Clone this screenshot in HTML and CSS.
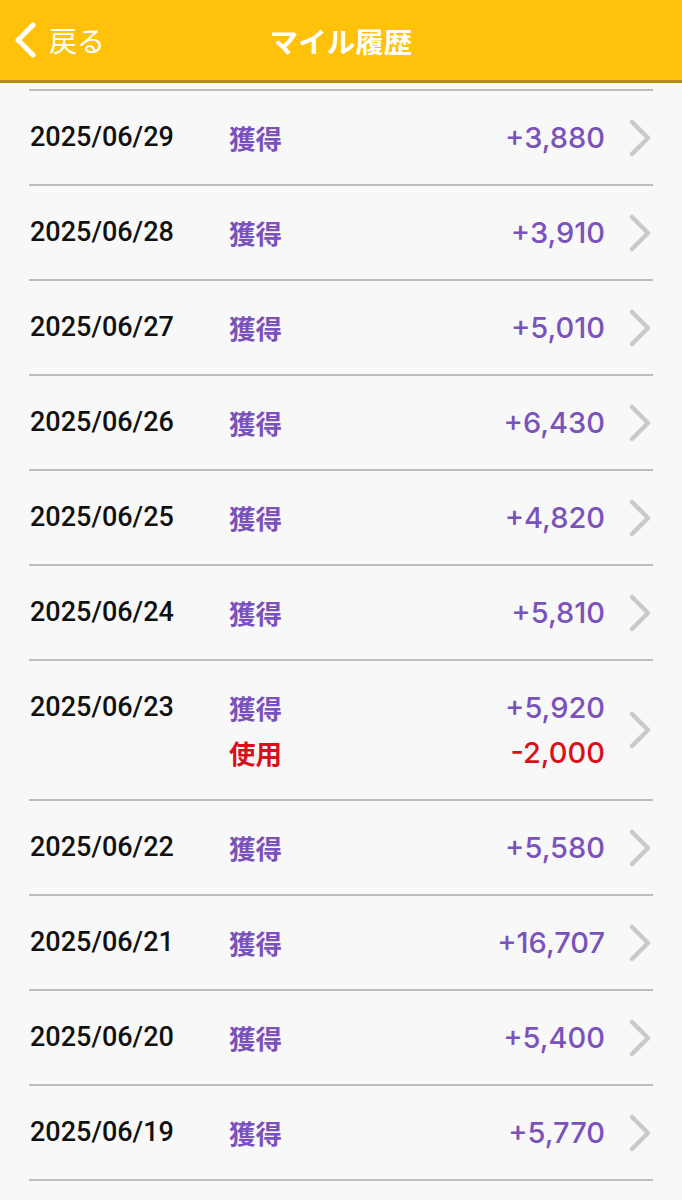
FILE: index.html
```html
<!DOCTYPE html>
<html lang="ja">
<head>
    <meta charset="UTF-8">
    <meta name="viewport" content="width=device-width, initial-scale=1.0">
    <title>マイル履歴</title>
    <link rel="stylesheet" href="styles.css">
</head>
<body>
    <div class="header">
        <a class="back" href="#">
            <svg class="back-icon" width="24" height="36" viewBox="0 0 24 36">
                <path d="M20 3 L5 18 L20 33" fill="none" stroke="#fff" stroke-width="5" stroke-linecap="round" stroke-linejoin="round"/>
            </svg>
            <span>戻る</span>
        </a>
        <h1>マイル履歴</h1>
        <div></div>
    </div>

    <div class="history">
        <div class="row">
            <div class="date">2025/06/29</div>
            <div class="entries">
                <div class="entry earn"><span>獲得</span><span>+3,880</span></div>
            </div>
            <div class="chevron"><svg width="24" height="40" viewBox="0 0 24 40"><path d="M4 4 L20 20 L4 36" fill="none" stroke="#c9c9cc" stroke-width="4.5" stroke-linecap="round" stroke-linejoin="round"/></svg></div>
        </div>
        <div class="row">
            <div class="date">2025/06/28</div>
            <div class="entries">
                <div class="entry earn"><span>獲得</span><span>+3,910</span></div>
            </div>
            <div class="chevron"><svg width="24" height="40" viewBox="0 0 24 40"><path d="M4 4 L20 20 L4 36" fill="none" stroke="#c9c9cc" stroke-width="4.5" stroke-linecap="round" stroke-linejoin="round"/></svg></div>
        </div>
        <div class="row">
            <div class="date">2025/06/27</div>
            <div class="entries">
                <div class="entry earn"><span>獲得</span><span>+5,010</span></div>
            </div>
            <div class="chevron"><svg width="24" height="40" viewBox="0 0 24 40"><path d="M4 4 L20 20 L4 36" fill="none" stroke="#c9c9cc" stroke-width="4.5" stroke-linecap="round" stroke-linejoin="round"/></svg></div>
        </div>
        <div class="row">
            <div class="date">2025/06/26</div>
            <div class="entries">
                <div class="entry earn"><span>獲得</span><span>+6,430</span></div>
            </div>
            <div class="chevron"><svg width="24" height="40" viewBox="0 0 24 40"><path d="M4 4 L20 20 L4 36" fill="none" stroke="#c9c9cc" stroke-width="4.5" stroke-linecap="round" stroke-linejoin="round"/></svg></div>
        </div>
        <div class="row">
            <div class="date">2025/06/25</div>
            <div class="entries">
                <div class="entry earn"><span>獲得</span><span>+4,820</span></div>
            </div>
            <div class="chevron"><svg width="24" height="40" viewBox="0 0 24 40"><path d="M4 4 L20 20 L4 36" fill="none" stroke="#c9c9cc" stroke-width="4.5" stroke-linecap="round" stroke-linejoin="round"/></svg></div>
        </div>
        <div class="row">
            <div class="date">2025/06/24</div>
            <div class="entries">
                <div class="entry earn"><span>獲得</span><span>+5,810</span></div>
            </div>
            <div class="chevron"><svg width="24" height="40" viewBox="0 0 24 40"><path d="M4 4 L20 20 L4 36" fill="none" stroke="#c9c9cc" stroke-width="4.5" stroke-linecap="round" stroke-linejoin="round"/></svg></div>
        </div>
        <div class="row">
            <div class="date">2025/06/23</div>
            <div class="entries">
                <div class="entry earn"><span>獲得</span><span>+5,920</span></div>
                <div class="entry use"><span>使用</span><span>-2,000</span></div>
            </div>
            <div class="chevron"><svg width="24" height="40" viewBox="0 0 24 40"><path d="M4 4 L20 20 L4 36" fill="none" stroke="#c9c9cc" stroke-width="4.5" stroke-linecap="round" stroke-linejoin="round"/></svg></div>
        </div>
        <div class="row">
            <div class="date">2025/06/22</div>
            <div class="entries">
                <div class="entry earn"><span>獲得</span><span>+5,580</span></div>
            </div>
            <div class="chevron"><svg width="24" height="40" viewBox="0 0 24 40"><path d="M4 4 L20 20 L4 36" fill="none" stroke="#c9c9cc" stroke-width="4.5" stroke-linecap="round" stroke-linejoin="round"/></svg></div>
        </div>
        <div class="row">
            <div class="date">2025/06/21</div>
            <div class="entries">
                <div class="entry earn"><span>獲得</span><span>+16,707</span></div>
            </div>
            <div class="chevron"><svg width="24" height="40" viewBox="0 0 24 40"><path d="M4 4 L20 20 L4 36" fill="none" stroke="#c9c9cc" stroke-width="4.5" stroke-linecap="round" stroke-linejoin="round"/></svg></div>
        </div>
        <div class="row">
            <div class="date">2025/06/20</div>
            <div class="entries">
                <div class="entry earn"><span>獲得</span><span>+5,400</span></div>
            </div>
            <div class="chevron"><svg width="24" height="40" viewBox="0 0 24 40"><path d="M4 4 L20 20 L4 36" fill="none" stroke="#c9c9cc" stroke-width="4.5" stroke-linecap="round" stroke-linejoin="round"/></svg></div>
        </div>
        <div class="row">
            <div class="date">2025/06/19</div>
            <div class="entries">
                <div class="entry earn"><span>獲得</span><span>+5,770</span></div>
            </div>
            <div class="chevron"><svg width="24" height="40" viewBox="0 0 24 40"><path d="M4 4 L20 20 L4 36" fill="none" stroke="#c9c9cc" stroke-width="4.5" stroke-linecap="round" stroke-linejoin="round"/></svg></div>
        </div>
    </div>
</body>
</html>
```

FILE: styles.css
```css
* {
    margin: 0;
    padding: 0;
    box-sizing: border-box;
}

body {
    font-family: Inter, "Noto Sans CJK JP", sans-serif;
    background: #f8f8f8;
    color: #111;
}

.header {
    display: grid;
    grid-template-columns: 1fr auto 1fr;
    align-items: center;
    height: 83px;
    background: #ffc10a;
    border-bottom: 3px solid #b58d12;
    color: #fff;
}

.back {
    display: flex;
    align-items: center;
    gap: 12px;
    padding-left: 13px;
    color: #fff;
    text-decoration: none;
    font-family: "Noto Sans CJK JP", sans-serif;
    font-size: 28px;
}

.header h1 {
    font-family: "Noto Sans CJK JP", sans-serif;
    font-size: 28.5px;
    font-weight: 700;
}

.history {
    margin: 6px 29px 0;
    border-bottom: 2px solid #bdbdbd;
}

.row {
    display: flex;
    align-items: center;
    border-top: 2px solid #bdbdbd;
    padding: 24px 0;
}

.date {
    align-self: flex-start;
    width: 200px;
    padding-left: 1px;
    line-height: 44px;
    font-family: Roboto, sans-serif;
    font-size: 27px;
    font-weight: 500;
}

.entries {
    flex: 1;
}

.entry {
    display: flex;
    justify-content: space-between;
    line-height: 45px;
}

.entry span:first-child {
    font-family: "Noto Sans CJK JP", sans-serif;
    font-size: 26.5px;
    font-weight: 700;
}

.entry span:last-child {
    font-size: 29px;
    font-weight: 500;
}

.earn {
    color: #7a52bb;
}

.use {
    color: #d9101a;
}

.chevron {
    display: flex;
    margin-left: 23px;
    margin-right: 1px;
}
```
